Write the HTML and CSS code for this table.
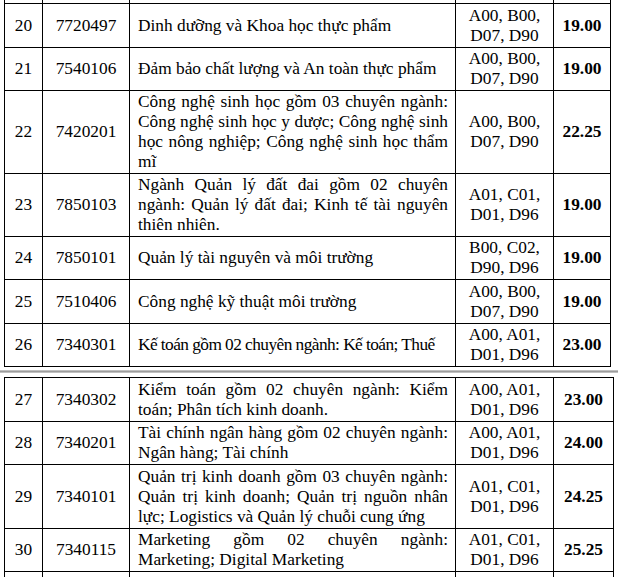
FILE: index.html
```html
<!DOCTYPE html>
<html lang="vi">
<head>
<meta charset="utf-8">
<title>Điểm chuẩn</title>
<link rel="stylesheet" href="styles.css">
</head>
<body>
<div class="page">
  <div class="sheet sheet-top">
    <div class="cell"></div>
    <div class="cell"></div>
    <div class="cell name"></div>
    <div class="cell">A00, B00,<br>D07, D90</div>
    <div class="cell score"></div>

    <div class="cell">20</div>
    <div class="cell">7720497</div>
    <div class="cell name"><div class="txt">Dinh dưỡng và Khoa học thực phẩm</div></div>
    <div class="cell">A00, B00,<br>D07, D90</div>
    <div class="cell score">19.00</div>

    <div class="cell">21</div>
    <div class="cell">7540106</div>
    <div class="cell name"><div class="txt">Đảm bảo chất lượng và An toàn thực phẩm</div></div>
    <div class="cell">A00, B00,<br>D07, D90</div>
    <div class="cell score">19.00</div>

    <div class="cell">22</div>
    <div class="cell">7420201</div>
    <div class="cell name"><div class="txt">Công nghệ sinh học gồm 03 chuyên ngành: Công nghệ sinh học y dược; Công nghệ sinh học nông nghiệp; Công nghệ sinh học thẩm mĩ</div></div>
    <div class="cell">A00, B00,<br>D07, D90</div>
    <div class="cell score">22.25</div>

    <div class="cell">23</div>
    <div class="cell">7850103</div>
    <div class="cell name"><div class="txt">Ngành Quản lý đất đai gồm 02 chuyên ngành: Quản lý đất đai; Kinh tế tài nguyên thiên nhiên.</div></div>
    <div class="cell">A01, C01,<br>D01, D96</div>
    <div class="cell score">19.00</div>

    <div class="cell">24</div>
    <div class="cell">7850101</div>
    <div class="cell name"><div class="txt">Quản lý tài nguyên và môi trường</div></div>
    <div class="cell">B00, C02,<br>D90, D96</div>
    <div class="cell score">19.00</div>

    <div class="cell">25</div>
    <div class="cell">7510406</div>
    <div class="cell name"><div class="txt">Công nghệ kỹ thuật môi trường</div></div>
    <div class="cell">A00, B00,<br>D07, D90</div>
    <div class="cell score">19.00</div>

    <div class="cell">26</div>
    <div class="cell">7340301</div>
    <div class="cell name"><div class="txt tight">Kế toán gồm 02 chuyên ngành: Kế toán; Thuế</div></div>
    <div class="cell">A00, A01,<br>D01, D96</div>
    <div class="cell score">23.00</div>
  </div>

  <div class="divider"></div>

  <div class="sheet sheet-bottom">
    <div class="cell">27</div>
    <div class="cell">7340302</div>
    <div class="cell name"><div class="txt">Kiểm toán gồm 02 chuyên ngành: Kiểm toán; Phân tích kinh doanh.</div></div>
    <div class="cell">A00, A01,<br>D01, D96</div>
    <div class="cell score">23.00</div>

    <div class="cell">28</div>
    <div class="cell">7340201</div>
    <div class="cell name"><div class="txt">Tài chính ngân hàng gồm 02 chuyên ngành: Ngân hàng; Tài chính</div></div>
    <div class="cell">A00, A01,<br>D01, D96</div>
    <div class="cell score">24.00</div>

    <div class="cell">29</div>
    <div class="cell">7340101</div>
    <div class="cell name"><div class="txt">Quản trị kinh doanh gồm 03 chuyên ngành: Quản trị kinh doanh; Quản trị nguồn nhân lực; Logistics và Quản lý chuỗi cung ứng</div></div>
    <div class="cell">A01, C01,<br>D01, D96</div>
    <div class="cell score">24.25</div>

    <div class="cell">30</div>
    <div class="cell">7340115</div>
    <div class="cell name"><div class="txt">Marketing gồm 02 chuyên ngành: Marketing; Digital Marketing</div></div>
    <div class="cell">A01, C01,<br>D01, D96</div>
    <div class="cell score">25.25</div>

    <div class="cell"></div>
    <div class="cell"></div>
    <div class="cell name"><div class="txt">Luật kinh doanh gồm 02 chuyên ngành: Luật kinh doanh; Luật thương mại quốc tế</div></div>
    <div class="cell"></div>
    <div class="cell score"></div>
  </div>
</div>
</body>
</html>
```
FILE: styles.css
```css
* {
  box-sizing: border-box;
}

html, body {
  margin: 0;
  padding: 0;
  background: #ffffff;
}

body {
  font-family: "Liberation Serif", "Times New Roman", Times, serif;
}

.page {
  width: 618px;
  height: 577px;
  overflow: hidden;
  font-family: "Liberation Serif", "Times New Roman", Times, serif;
  font-size: 17.33px;
  line-height: 20px;
  color: #000000;
}

.sheet {
  display: grid;
  width: max-content;
  margin-left: 4px;
  border-left: 1px solid #000;
  border-top: 1px solid #000;
}

.sheet-top {
  margin-top: -41px;
  grid-template-columns: 38px 87px 326px 98px 57px;
  grid-template-rows: 44px 44px 43px 83px 63px 43px 44px 43px;
}

.sheet-bottom {
  grid-template-columns: 38px 87px 326px 98px 60px;
  grid-template-rows: 44px 43px 64px 43px 63px;
}

.cell {
  display: flex;
  align-items: center;
  justify-content: center;
  text-align: center;
  border-right: 1px solid #000;
  border-bottom: 1px solid #000;
  padding: 1px 0;
}

.cell.name {
  justify-content: flex-start;
  padding: 1px 7px 1px 8px;
}

.txt {
  width: 100%;
  text-align: justify;
}

.tight {
  letter-spacing: -0.56px;
}

.score {
  font-weight: bold;
}

.divider {
  height: 3px;
  margin: 3px 0 4px;
  background: linear-gradient(#d2d2d2, #9c9c9c, #d2d2d2);
}
```
